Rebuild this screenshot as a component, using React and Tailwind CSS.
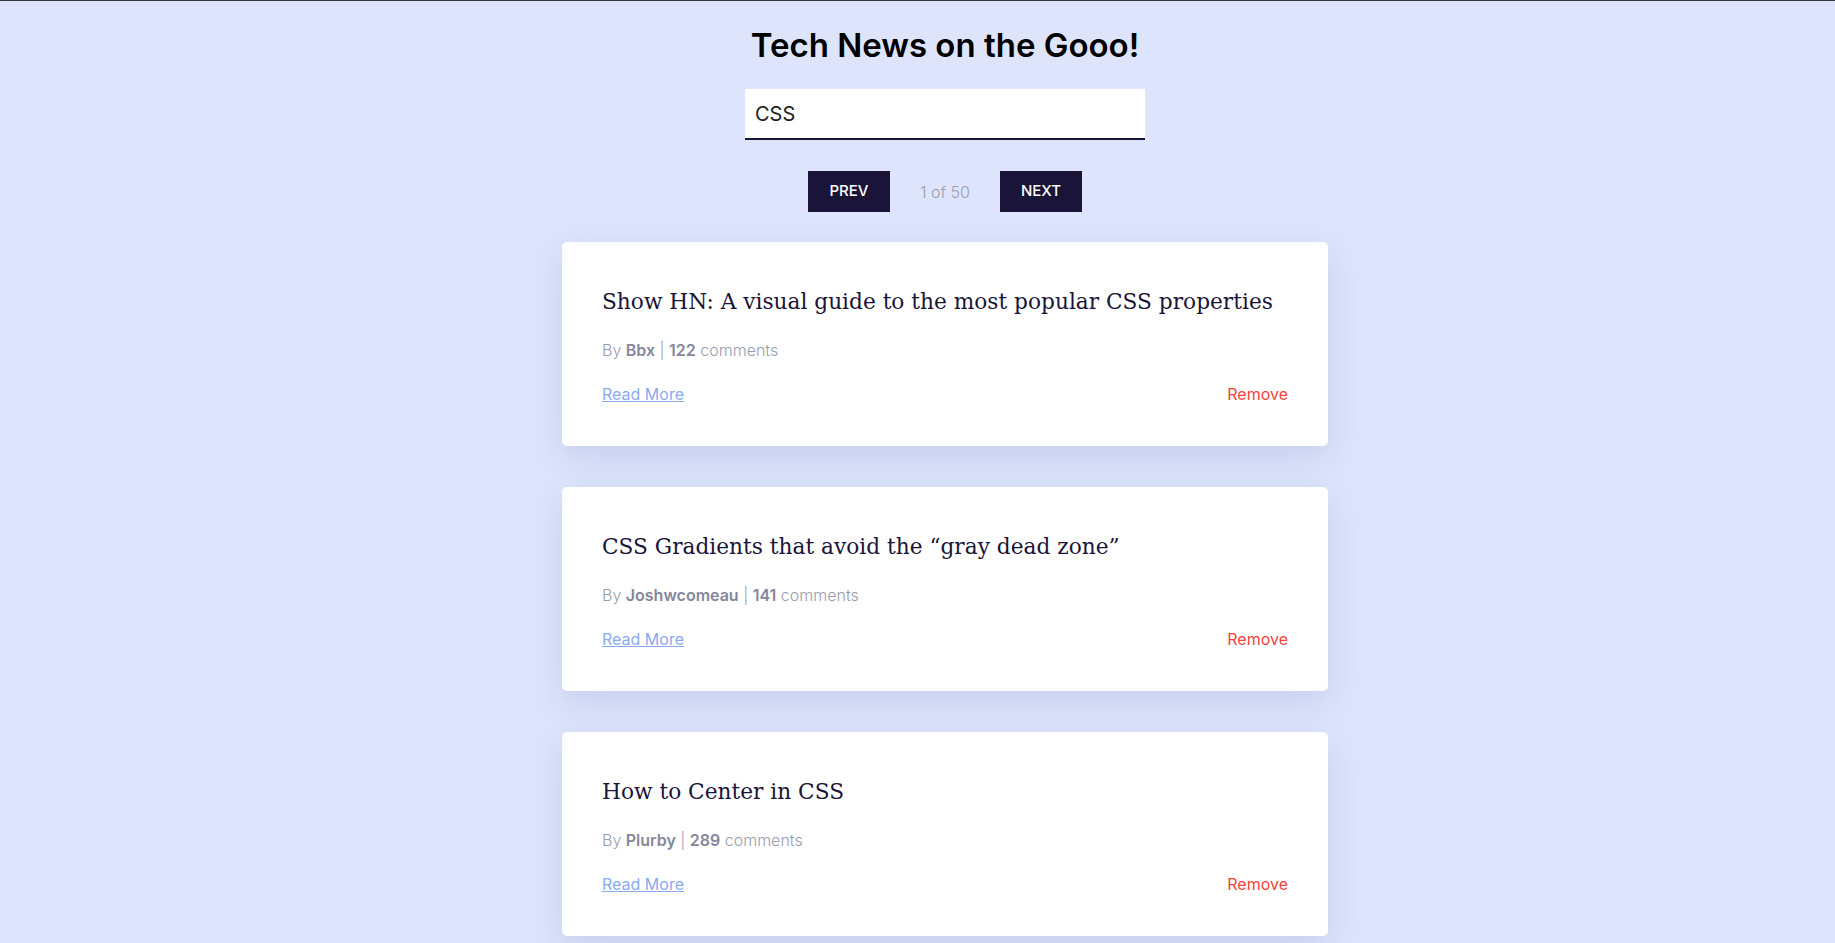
import React, { useState } from "react";

const stories = [
  { id: 1, title: "Show HN: A visual guide to the most popular CSS properties", author: "Bbx", comments: 122 },
  { id: 2, title: "CSS Gradients that avoid the \u201cgray dead zone\u201d", author: "Joshwcomeau", comments: 141 },
  { id: 3, title: "How to Center in CSS", author: "Plurby", comments: 289 },
];

const StoryCard = ({ story, onRemove }) => (
  <div className="bg-white rounded-[5px] shadow-[0_12px_32px_rgba(90,100,160,0.16)] px-10 pt-[44px] pb-10">
    <h2 className="text-[21.7px] leading-8 text-[#1a1538] font-['DejaVu_Serif',serif]">{story.title}</h2>
    <p className="mt-5 text-base leading-6 font-light text-[#9a9cae]">
      By <span className="font-semibold text-[#85879b]">{story.author}</span> |{" "}
      <span className="font-semibold text-[#85879b]">{story.comments}</span> comments
    </p>
    <div className="mt-5 flex items-center justify-between text-base leading-6">
      <a href="#" className="text-[#8aaaf0] underline">Read More</a>
      <button onClick={() => onRemove(story.id)} className="text-[#f4433a]">Remove</button>
    </div>
  </div>
);

export default function App() {
  const [query, setQuery] = useState("CSS");
  const [items, setItems] = useState(stories);

  return (
    <div className="min-h-screen bg-[#dde4fc] border-t border-[#3a3a3a] font-['Inter',sans-serif] pl-[55px]">
      <div className="flex flex-col items-center pt-6 pb-10">
        <h1 className="text-[33px] leading-10 font-semibold text-black">Tech News on the Gooo!</h1>

        <input
          value={query}
          onChange={(e) => setQuery(e.target.value)}
          className="mt-6 w-[400px] h-[51px] bg-white border-b-2 border-[#1a1538] px-2.5 text-xl text-[#222] outline-none"
        />

        <div className="mt-[31px] flex items-center gap-[14px]">
          <button className="w-[82px] h-[41px] bg-[#1a1538] text-white font-medium text-[15px]">PREV</button>
          <span className="w-[82px] text-center text-base font-light text-[#9a9cae]">1 of 50</span>
          <button className="w-[82px] h-[41px] bg-[#1a1538] text-white font-medium text-[15px]">NEXT</button>
        </div>

        <div className="mt-[30px] w-[766px] flex flex-col gap-[41px]">
          {items.map((s) => (
            <StoryCard key={s.id} story={s} onRemove={(id) => setItems(items.filter((i) => i.id !== id))} />
          ))}
        </div>
      </div>
    </div>
  );
}
